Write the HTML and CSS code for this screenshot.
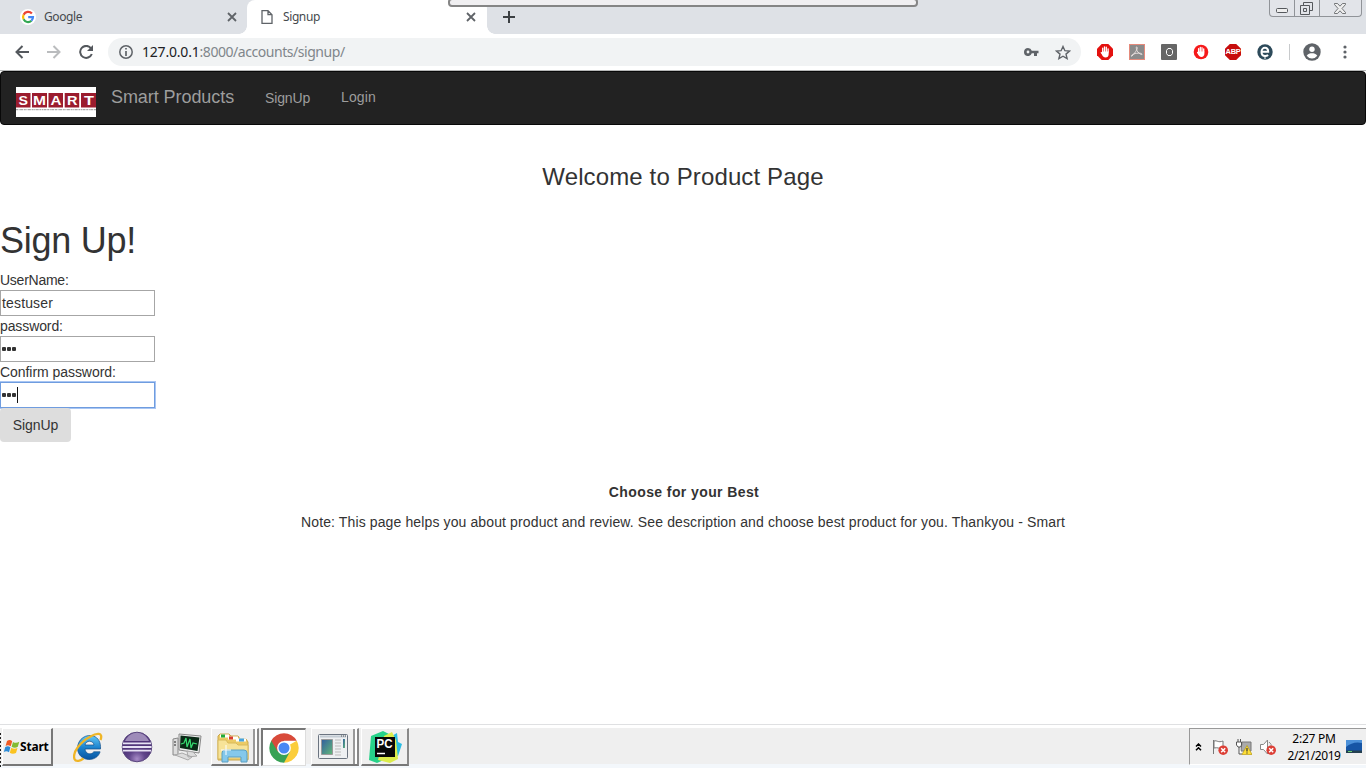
FILE: index.html
```html
<!DOCTYPE html>
<html lang="en">
<head>
<meta charset="utf-8">
<title>Signup</title>
<link rel="stylesheet" href="styles.css">
</head>
<body>
<header class="tabs">
  <div class="tab tab-google">
    <svg class="favicon" width="16" height="16" viewBox="0 0 16 16"><circle cx="8" cy="8" r="8" fill="#fff"/><g fill="none" stroke-width="2.2"><path d="M11.9 4.6A5 5 0 0 0 3.6 5.8" stroke="#ea4335"/><path d="M3.6 5.8a5 5 0 0 0 0 4.5" stroke="#fbbc05"/><path d="M3.6 10.3a5 5 0 0 0 7.8 1.5" stroke="#34a853"/><path d="M11.4 11.8A5 5 0 0 0 13 8.1H8.2" stroke="#4285f4"/></g></svg>
    <span class="tab-title t-google">Google</span>
    <svg class="close" width="10" height="10" viewBox="0 0 10 10"><path d="M1 1l8 8M9 1L1 9" stroke="#5f6368" stroke-width="1.8"/></svg>
  </div>
  <div class="tab tab-active">
    <svg class="doc" width="12" height="14" viewBox="0 0 12 14"><path d="M1 .7h6l4 4v8.600H1zM7 .7v4h4" fill="none" stroke="#5f6368" stroke-width="1.300"/></svg>
    <span class="tab-title t-signup">Signup</span>
    <svg class="close" width="10" height="10" viewBox="0 0 10 10"><path d="M1 1l8 8M9 1L1 9" stroke="#5f6368" stroke-width="1.800"/></svg>
  </div>
  <div class="newtab"><svg width="12" height="12" viewBox="0 0 12 12"><path d="M6 0v12M0 6h12" stroke="#3c4043" stroke-width="2"/></svg></div>
  <div class="drag-strip"></div>
  <div class="window-buttons">
    <span class="wb wb-min"><svg width="12" height="5"><rect x=".5" y=".5" width="11" height="4" rx="1" fill="#eee" stroke="#55585c"/></svg></span>
    <span class="wb wb-max"><svg width="13" height="13"><path d="M3.500 3.500v-3h9v8h-3M.5 3.500h9v9h-9zM3.500 6.500h3v3h-3z" fill="none" stroke="#55585c"/></svg></span>
    <span class="wb wb-close"><svg width="12" height="11" viewBox="0 0 12 11"><path d="M.5.5h3L6 3.200 8.500.5h3v1L8 5.500l3.500 4v1h-3L6 7.800 3.500 10.500h-3v-1L4 5.500l-3.500-4z" fill="#eee" stroke="#55585c" stroke-width=".8"/></svg></span>
  </div>
</header>
<div class="toolbar">
  <svg class="nav back" width="14" height="14" viewBox="0 0 14 14"><path d="M14 7H1.500M7.500 1L1.500 7l6 6" fill="none" stroke="#54585d" stroke-width="2"/></svg>
  <svg class="nav fwd" width="14" height="14" viewBox="0 0 14 14"><path d="M0 7h12.500M6.500 1l6 6-6 6" fill="none" stroke="#babcbe" stroke-width="2"/></svg>
  <svg class="nav reload" width="15" height="14" viewBox="0 0 15 14"><path d="M12 3.300A6 6 0 1 0 12.800 9" fill="none" stroke="#54585d" stroke-width="2"/><path d="M14 0v6H8z" fill="#54585d"/></svg>
  <div class="omnibox">
    <svg width="14" height="14" viewBox="0 0 14 14"><circle cx="7" cy="7" r="6.200" fill="none" stroke="#5f6368" stroke-width="1.500"/><path d="M7 3v1.600M7 6v5" stroke="#5f6368" stroke-width="1.700"/></svg>
    <span class="host">127.0.0.1</span><span class="path">:8000/accounts/signup/</span>
    <svg class="key" width="15" height="8" viewBox="0 0 15 8"><path d="M4 0a4 4 0 1 0 3.800 5.300H10V8h3V5.300h1.500V2.700H7.800A4 4 0 0 0 4 0zm0 2.600a1.400 1.400 0 1 1 0 2.800 1.400 1.400 0 0 1 0-2.800z" fill="#5f6368"/></svg>
    <svg class="star" width="16" height="15" viewBox="0 0 16 15"><path d="M8 1.500l1.900 4.200 4.600.4-3.500 3 1.100 4.500L8 11.200l-4.100 2.400L5 9.100l-3.500-3 4.600-.4z" fill="none" stroke="#5f6368" stroke-width="1.400"/></svg>
  </div>
  <div class="extensions">
    <svg width="16" height="16" viewBox="0 0 16 16"><path d="M4.700 0h6.600L16 4.700v6.600L11.300 16H4.700L0 11.300V4.700z" fill="#e4110f"/><g fill="none" stroke="#fff" stroke-width="1.300" stroke-linecap="round"><path d="M5.700 8V4.200M7.500 8V2.800M9.300 8V3.200M11.100 8V4.800M4.300 8.600l1.500 2"/></g><path d="M5 7.500h6.700v2.500c0 2.500-1.300 3.500-3.200 3.500-1.800 0-2.600-1-3.400-2.800z" fill="#fff"/></svg>
    <svg width="16" height="16" viewBox="0 0 16 16"><rect x=".5" y=".5" width="15" height="15" fill="#8b8b8b" stroke="#e58a7b"/><path d="M7.500 3c2 0 0 4.500-4.500 9-1 1-1-.7.500-1.500 3-1.500 9-2 9.500-.3.400 1.500-5-1.500-5.500-5C7.300 4 7 3 7.500 3z" fill="none" stroke="#e8e0df" stroke-width="1"/></svg>
    <svg width="16" height="16" viewBox="0 0 16 16"><rect width="16" height="16" rx="1" fill="#666"/><path d="M7 4.500h3l1.500 2v3l-1.500 2H7l-1.500-2v-3z" fill="none" stroke="#fff"/></svg>
    <svg width="16" height="16" viewBox="0 0 16 16"><circle cx="8" cy="8" r="7.300" fill="#f6191a"/><path d="M5.600 8V4.700M7.300 8V3.500M9 8V3.700M10.700 8V5M4.600 8.500l1.600 2" stroke="#fff" stroke-width="1.300" stroke-linecap="round"/><path d="M5 7.500h6.400v2.300c0 2-1.200 3.100-3 3.100-1.600 0-2.500-1-3.100-2.400z" fill="#fff"/></svg>
    <div class="abp">ABP</div>
    <svg width="16" height="16" viewBox="0 0 16 16"><circle cx="8" cy="8" r="7.700" fill="#2d4a5a"/><path d="M4.700 7.800h6.500C11.200 5 9.800 3.800 8 3.800S4.500 5.400 4.500 8s1.700 4 3.600 4c1.300 0 2.200-.3 3-1" fill="none" stroke="#fff" stroke-width="2"/><path d="M8 12v3" stroke="#fff"/></svg>
  </div>
  <div class="divider"></div>
  <svg class="avatar" width="18" height="18" viewBox="0 0 18 18"><circle cx="9" cy="9" r="8.700" fill="#5f6368"/><circle cx="9" cy="6.300" r="2.700" fill="#fff"/><path d="M3.700 12.800C5 10.700 7 10.300 9 10.300s4 .4 5.300 2.500A6.500 6.500 0 0 1 9 15.500a6.500 6.500 0 0 1-5.300-2.700z" fill="#fff"/></svg>
  <svg class="dots" width="4" height="14" viewBox="0 0 4 14"><g fill="#5f6368"><circle cx="2" cy="2" r="1.600"/><circle cx="2" cy="7" r="1.600"/><circle cx="2" cy="12" r="1.600"/></g></svg>
</div>
<main class="page">
  <nav class="navbar">
    <svg class="logo" width="80" height="30" viewBox="0 0 80 30"><rect width="80" height="30" fill="#fff"/><g fill="#9b1c2e"><path d="M0 6h14.500v14.500H0zM16 6h15v14.500H16zM32.500 6h14.500v14.500H32.500zM48.700 6h14.500v14.500H48.700zM65 6h15v14.500H65z"/></g><g class="logo-text"><text x="2.500" y="17.500" textLength="9.500" lengthAdjust="spacingAndGlyphs">S</text><text x="17" y="17.500" textLength="13" lengthAdjust="spacingAndGlyphs">M</text><text x="34.500" y="17.500" textLength="11" lengthAdjust="spacingAndGlyphs">A</text><text x="51" y="17.500" textLength="10.500" lengthAdjust="spacingAndGlyphs">R</text><text x="68" y="17.500" textLength="10" lengthAdjust="spacingAndGlyphs">T</text></g><path d="M0 22.700h80" stroke="#aaa" stroke-width="1.300" stroke-dasharray="2 .6 1 .5 3 .7"/></svg>
    <span class="brand">Smart Products</span>
    <span class="link link-signup">SignUp</span>
    <span class="link link-login">Login</span>
  </nav>
  <h3 class="welcome"><span>Welcome to Product Page</span></h3>
  <h1 class="heading">Sign Up!</h1>
  <form class="form">
    <label class="l-user">UserName:</label>
    <div class="field"><span class="value">testuser</span></div>
    <label class="l-pass">password:</label>
    <div class="field"><i class="dot"></i><i class="dot"></i><i class="dot"></i></div>
    <label class="l-confirm">Confirm password:</label>
    <div class="field focused"><i class="dot"></i><i class="dot"></i><i class="dot"></i><i class="caret"></i></div>
    <button type="button" class="submit">SignUp</button>
  </form>
  <p class="choose"><b>Choose for your Best</b></p>
  <p class="note"><span>Note: This page helps you about product and review. See description and choose best product for you. Thankyou - Smart</span></p>
</main>
<footer class="taskbar">
  <div class="grip"></div>
  <div class="start">
    <svg width="17" height="16" viewBox="0 0 17 16"><path d="M4 2q3-2 5.200.2L7.700 7.300Q5 5.500 2.600 7z" fill="#ef5a24"/><path d="M10 3q3 1.800 6.300-.2l-1.500 5q-3 1.800-6.200 0z" fill="#83bb32"/><path d="M2.300 8Q5 6.500 7.400 8.300L6 13.300Q3.500 11.500.8 13z" fill="#2c8bd6"/><path d="M8.300 8.800q3 1.800 6.200.1l-1.500 5q-3.200 1.700-6.200-.1z" fill="#fbc320"/></svg>
    <span>Start</span>
  </div>
  <div class="quick">
    <svg width="30" height="32" viewBox="0 0 30 32"><defs><linearGradient id="ie" x2="0" y2="1"><stop stop-color="#64c9f6"/><stop offset=".5" stop-color="#1c83ce"/><stop offset="1" stop-color="#0754a0"/></linearGradient></defs><path d="M27.500 18H12c.3 5 6 6.500 8.800 2.800h6.300C24 31.500 6 31.500 4.500 18 4 1 29-1 27.500 18zM12 14h9c-.7-5-8-5-9 0z" fill="url(#ie)" stroke="#114f8a" stroke-width=".7"/><path d="M27.500 9c3-8-4-7-10-3.500C8 10.500-1 21 1.500 28c1.500 3.500 6 1.500 9-.5" fill="none" stroke="#efb526" stroke-width="2.300"/></svg>
    <svg width="32" height="32" viewBox="0 0 32 32"><defs><radialGradient id="ec" cy=".9"><stop stop-color="#a78bc7"/><stop offset=".55" stop-color="#60458a"/><stop offset="1" stop-color="#503479"/></radialGradient></defs><circle cx="16" cy="16" r="14.800" fill="url(#ec)" stroke="#5a477f"/><path d="M2 12.300h28M1.500 16h29M2 19.700h28" stroke="#e7e2f4" stroke-width="1.800"/><path d="M4 10C9-1 23-1 28 10z" fill="#d2c6e4" opacity=".6"/></svg>
    <svg width="32" height="30" viewBox="0 0 32 30"><path d="M2 7l5-1v17H2z" fill="#ddd" stroke="#888"/><path d="M3 10h2M3 13h2" stroke="#222"/><path d="M8 2l22 2-2 17-20-3z" fill="#eee" stroke="#888"/><path d="M9.500 3.500L28.500 5.500 26.500 19 9 16z" fill="#092a16"/><path d="M10 12l3-1 2-5 1 9 3-8 1 9 2-5 4 1" fill="none" stroke="#36dc70" stroke-width="1.200"/><path d="M16 19l6 1 4 4-9 1zM4 23l7-2 10 4-4 3z" fill="#ddd" stroke="#aaa"/></svg>
  </div>
  <div class="apps">
    <div class="app stacked"><svg width="34" height="32" viewBox="0 0 34 32"><path d="M2 5l2-2h9l2 2h7l2 3h6l2 3v18H2z" fill="#eccb65" stroke="#c9a64c"/><path d="M4 5h9" stroke="#fff" stroke-width="3"/><path d="M5 5h4" stroke="#20aa3b" stroke-width="3"/><path d="M12 7h10" stroke="#fff" stroke-width="3"/><path d="M13 7h4" stroke="#d73c2f" stroke-width="3"/><path d="M20 9h10" stroke="#fff" stroke-width="3"/><path d="M23 9h5" stroke="#46a4df" stroke-width="3"/><path d="M2 9h8l2 3h8l2 2h10v14H2z" fill="#f7e398" stroke="#d8b95d"/><path d="M6 31V22q0-3 3-3h19q3 0 3 3v9h-6v-5H12v5z" fill="#84c8eb" stroke="#5a9fc2"/><path d="M10 14v10M5 19h10" stroke="#fff"/></svg></div>
    <div class="app active"><svg width="30" height="30" viewBox="0 0 30 30"><path d="M15 15L27.730 7.650A14.700 14.700 0 0 1 15 29.700z" fill="#fbcd3b"/><path d="M15 15v-7L2.270 7.650A14.700 14.700 0 0 0 15 29.700L21.300 18z" fill="#38a255"/><path d="M2.270 7.650A14.700 14.700 0 0 1 27.730 7.650H15L8.700 18.500z" fill="#d84a3a"/><circle cx="15" cy="15" r="6.900" fill="#fff"/><circle cx="15" cy="15" r="5.500" fill="#4988f4"/></svg></div>
    <div class="app stacked app-window"><svg width="30" height="26" viewBox="0 0 30 26"><defs><linearGradient id="win" x2="1" y2="1"><stop stop-color="#315d9f"/><stop offset="1" stop-color="#62b979"/></linearGradient></defs><rect x=".5" y=".5" width="29" height="24" rx="1" fill="#eef0f2" stroke="#6b7480"/><path d="M2 2.500h26" stroke="#c2cbd3" stroke-width="2"/><path d="M23 2h5" stroke="#555" stroke-dasharray="1 1"/><path d="M3.500 5.500h11v15h-11z" fill="url(#win)" stroke="#999"/><path d="M17 6h6M17 9h6M17 12h6M17 15h6M17 18h6M17 21h6" stroke="#bbb"/><path d="M25 5h2v9h-2z" fill="url(#win)"/></svg></div>
    <div class="app app-pc"><svg width="34" height="32" viewBox="0 0 34 32"><path d="M3 5L15 0l10 5-5 22-11 5-8-3z" fill="#27d28a"/><path d="M22 6l7-4 1 9 4 2-4 12-8 1z" fill="#29bde4"/><path d="M16 5l8-4 4 8 2 19-8 4-12-3z" fill="#dced4b"/><rect x="7" y="6" width="20" height="20" fill="#080808"/><text class="pc-text" x="8.500" y="16.500" textLength="16" lengthAdjust="spacingAndGlyphs">PC</text><path d="M9 22.500h8" stroke="#fff" stroke-width="1.500"/></svg></div>
  </div>
  <div class="tray">
    <svg class="chev" width="7" height="8" viewBox="0 0 7 8"><path d="M1 3.500L3.500 1 6 3.500M1 7.300l2.500-2.500L6 7.300" fill="none" stroke="#000" stroke-width="1.500"/></svg>
    <svg width="16" height="16" viewBox="0 0 16 16"><path d="M1.500 1v14M2 2c3-1 4 2 9 0v7c-4 1-5-1-9 0z" fill="#fff" stroke="#777"/><circle cx="11.200" cy="11.200" r="4.800" fill="#dc3f36"/><path d="M9.200 9.200l4 4M13.200 9.200l-4 4" stroke="#fff" stroke-width="1.500"/></svg>
    <svg width="16" height="16" viewBox="0 0 16 16"><path d="M6 3h9v9H5z" fill="#aaa" stroke="#777"/><path d="M2 0v3M4.500 0v3M.5 3h5v3l-1 2H2L.5 6zM3 8v7h3" fill="#fff" stroke="#555"/><path d="M11 6.500l5 9H6z" fill="#ffdf36" stroke="#b99b14" stroke-width=".7"/><path d="M11 9v3.500M11 13.500v1" stroke="#333" stroke-width="1.200"/></svg>
    <svg width="16" height="16" viewBox="0 0 16 16"><path d="M.5 5.500h3L7.500 1v14L3.500 10.500h-3zM9 3q3 2 2 5" fill="#fff" stroke="#888"/><circle cx="11.200" cy="11.200" r="4.800" fill="#dc3f36"/><path d="M9.200 9.200l4 4M13.200 9.200l-4 4" stroke="#fff" stroke-width="1.500"/></svg>
    <div class="clock"><span class="time">2:27 PM</span><span class="date">2/21/2019</span></div>
    <svg class="desk" width="16" height="13" viewBox="0 0 16 13"><path d="M0 0h16v11H0z" fill="#1655a5"/><path d="M0 7q7-6 16-4V0H0z" fill="#4c91d9"/><path d="M0 10.500h16V13H0z" fill="#254050"/><path d="M2 11.500h4" stroke="#6bd06f"/></svg>
  </div>
</footer>
<div class="remote-bar"></div>
</body>
</html>
```

FILE: styles.css
```css
* { box-sizing: border-box; }
body { margin: 0; width: 1366px; height: 768px; overflow: hidden; display: flex; flex-direction: column; background: #fff; color: #333; font: 14px/20px "Liberation Sans", sans-serif; position: relative; }
svg { display: block; flex: none; }
span { white-space: nowrap; }

.tabs { height: 34px; flex: none; display: flex; background: #dee1e6; font: 12px/34px "Noto Sans", sans-serif; color: #45494d; }
.tab { display: flex; align-items: center; height: 34px; }
.tab-google { width: 247px; padding: 0 10px 0 20px; background: #dee1e6; border-radius: 0 0 8px 0; }
.tab-active { width: 240px; padding: 0 11px 0 14px; background: #fff; border-radius: 8px 8px 0 0; }
.tab-title { letter-spacing: -0.4px; }
.favicon { margin-right: 8px; }
.doc { margin-right: 10px; }
.close { margin-left: auto; }
.tab-google, .newtab { position: relative; }
.tab-google::after, .newtab::before { content: ""; position: absolute; bottom: 0; width: 8px; height: 8px; }
.tab-google::after { right: 0; background: radial-gradient(circle at 0 0, #dee1e6 7.5px, #fff 8px); }
.newtab::before { left: 0; background: radial-gradient(circle at 100% 0, #dee1e6 7.5px, #fff 8px); }
.newtab { padding: 11px 0 0 16px; }
.drag-strip { flex: 1; }
.window-buttons { display: flex; width: 93px; height: 17px; margin-right: 4px; border: 1px solid #909398; border-top: 0; border-radius: 0 0 4px 4px; background: #e2e4e9; }
.wb { display: flex; align-items: center; justify-content: center; border-right: 1px solid #909398; }
.wb-min { width: 25px; padding-top: 4px; }
.wb-max { width: 25px; padding-right: 1px; }
.wb-close { flex: 1; border-right: 0; padding-right: 2px; }
.remote-bar { position: absolute; left: 448px; top: -2px; width: 470px; height: 9px; border: 2px solid #858585; border-radius: 4px; background: #f0eff1; }

.toolbar { height: 37px; flex: none; display: flex; align-items: center; background: #fff; border-bottom: 1px solid #b6b8b8; padding-left: 15px; }
.fwd { margin-left: 18px; }
.reload { margin-left: 18px; }
.omnibox { width: 973px; height: 28px; margin-left: 14px; padding: 0 10px 0 11px; border-radius: 14px; background: #f1f3f4; display: flex; align-items: center; font: 14px/28px "Noto Sans", sans-serif; }
.host { color: #202124; margin-left: 9px; letter-spacing: -0.2px; }
.path { color: #80868b; letter-spacing: -0.45px; }
.key { margin-left: auto; }
.star { margin-left: 16px; }
.extensions { display: flex; gap: 16px; margin-left: 16px; }
.abp { width: 16px; height: 16px; background: #c70d0d; clip-path: polygon(30% 0, 70% 0, 100% 30%, 100% 70%, 70% 100%, 30% 100%, 0 70%, 0 30%); color: #fff; text-align: center; font: bold 7.5px/16px "Liberation Sans", sans-serif; letter-spacing: -0.3px; }
.divider { width: 1px; height: 16px; margin: 0 13px 0 16px; background: #c8cacc; }
.dots { margin-left: 22px; }

.page { height: 653px; flex: none; display: flex; flex-direction: column; }
.navbar { height: 54px; flex: none; border: 1px solid #080808; border-radius: 4px; background: #222; color: #9d9d9d; display: flex; align-items: flex-start; padding: 15px 15px 0; }
.logo-text { font: bold 12px "Liberation Sans", sans-serif; fill: #fff; }
.brand { font-size: 18px; margin-left: 15px; width: 123px; letter-spacing: -0.07px; }
.link { padding-top: 1px; }
.link-signup { margin-left: 31px; width: 45px; letter-spacing: -0.15px; }
.link-login { margin-left: 31px; padding-top: 0; letter-spacing: 0.15px; }
.welcome { margin: 39px 0 0; font-size: 24px; font-weight: 400; line-height: 26px; text-align: center; letter-spacing: 0.13px; }
.heading { margin: 31px 0 9px; font-size: 36px; font-weight: 400; line-height: 40px; letter-spacing: -0.25px; }
.form { display: flex; flex-direction: column; align-items: flex-start; }
.form label { height: 20px; white-space: nowrap; }
.l-user { letter-spacing: -0.25px; }
.l-pass { letter-spacing: -0.1px; }
.l-confirm { letter-spacing: -0.05px; }
.value { letter-spacing: 0.15px; }
.field { width: 155px; height: 26px; padding: 1px 0; border: 1px solid #a6a6a6; background: #fff; display: flex; align-items: center; }
.field .value { margin-left: 1px; }
.dot { width: 4px; height: 4px; margin-left: 1px; border-radius: 1px; background: #333; }
.focused { border-color: #6f9cdf; box-shadow: 0 0 0 1px #a9c6f3; }
.caret { width: 1px; height: 16px; margin-left: 1px; background: #111; }
.submit { width: 71px; height: 34px; padding: 0; border: 0; border-radius: 4px; background: #ddd; color: #333; font: 14px/34px "Liberation Sans", sans-serif; letter-spacing: -0.1px; }
.choose { margin: 40px 0 0 2px; text-align: center; letter-spacing: 0.4px; }
.note { margin: 10px 0 0; text-align: center; letter-spacing: 0.122px; }

.taskbar { height: 44px; flex: none; display: flex; align-items: flex-start; padding-top: 4px; background: linear-gradient(#dfe0e2 0 1px, #fff 1px 4px, #efefef 4px 40px, #f3f7fb 40px); }
.grip { width: 1px; height: 36px; margin-top: 5px; background: repeating-linear-gradient(#222 0 2px, transparent 2px 4px); }
.start { width: 51px; height: 38px; margin-left: 1px; margin-top: 0; display: flex; align-items: center; border: 1px solid #fff; border-right: 2px solid #777; border-bottom: 2px solid #777; color: #000; font: bold 12px "Noto Sans", sans-serif; letter-spacing: -0.2px; }
.quick { display: flex; align-items: center; gap: 18px; height: 38px; margin-left: 20px; }
.apps { display: flex; gap: 2px; margin-left: 8px; }
.app { width: 48px; height: 38px; display: flex; align-items: center; justify-content: center; background: #efefef; border: 1px solid #fff; border-right: 2px solid #888; border-bottom: 2px solid #777; }
.stacked { box-shadow: inset -2px 0 #fff, inset -4px 0 #999; padding-right: 3px; }
.active { width: 45px; margin-right: 3px; background: #fff; border: 2px solid #777; border-right: 1px solid #ddd; border-bottom: 1px solid #ddd; }
.pc-text { font: bold 12px "Liberation Sans", sans-serif; fill: #fff; }
.tray { width: 177px; height: 37px; margin-left: auto; padding-left: 5px; display: flex; align-items: center; border: 1px solid #999; border-right: 0; border-bottom-color: #fff; color: #000; font: 12px/17px "Noto Sans", sans-serif; }
.tray > svg { margin-right: 8px; }
.tray > .chev { margin-right: 10px; }
.clock { width: 54px; display: flex; flex-direction: column; align-items: center; margin-left: 3px; letter-spacing: -0.45px; }
.time { letter-spacing: -0.25px; }
.tray > .desk { margin: 0 0 0 5px; }
```
